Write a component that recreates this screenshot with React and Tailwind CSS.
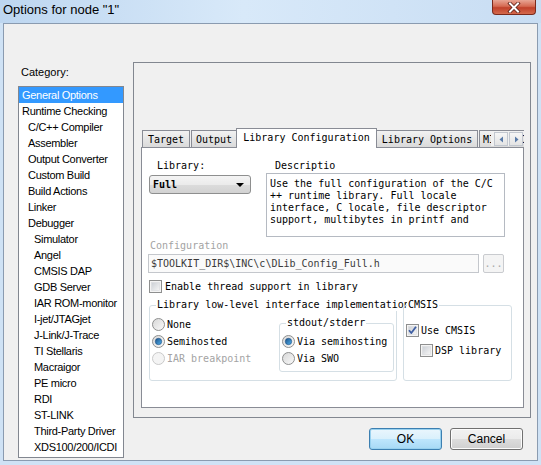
import React from "react";

const cats = [
  ["General Options", 0, true],
  ["Runtime Checking", 0],
  ["C/C++ Compiler", 1],
  ["Assembler", 1],
  ["Output Converter", 1],
  ["Custom Build", 1],
  ["Build Actions", 1],
  ["Linker", 1],
  ["Debugger", 1],
  ["Simulator", 2],
  ["Angel", 2],
  ["CMSIS DAP", 2],
  ["GDB Server", 2],
  ["IAR ROM-monitor", 2],
  ["I-jet/JTAGjet", 2],
  ["J-Link/J-Trace", 2],
  ["TI Stellaris", 2],
  ["Macraigor", 2],
  ["PE micro", 2],
  ["RDI", 2],
  ["ST-LINK", 2],
  ["Third-Party Driver", 2],
  ["XDS100/200/ICDI", 2],
];
const indent = ["pl-[3px]", "pl-[9px]", "pl-[15px]"];

function Radio({ checked, disabled }) {
  return (
    <svg width="13" height="13" viewBox="0 0 13 13" className="shrink-0">
      <defs>
        <linearGradient id="rin" x1="0" y1="0" x2="1" y2="1">
          <stop offset="0" stopColor="#d6d6d6" />
          <stop offset="1" stopColor="#fbfbfb" />
        </linearGradient>
        <linearGradient id="rdot" x1="0" y1="0" x2="1" y2="1">
          <stop offset="0" stopColor="#1b4f86" />
          <stop offset="1" stopColor="#52b3f0" />
        </linearGradient>
      </defs>
      <circle cx="6.5" cy="6.5" r="6" fill={disabled ? "#f4f4f4" : "url(#rin)"} stroke={disabled ? "#c9c9c9" : "#8e8f8f"} strokeWidth="1" />
      {checked && <circle cx="6.5" cy="6.5" r="3.2" fill="url(#rdot)" stroke="#1d4d80" strokeWidth="0.6" />}
    </svg>
  );
}

function Check({ checked }) {
  return (
    <svg width="13" height="13" viewBox="0 0 13 13" className="shrink-0">
      <defs>
        <linearGradient id="cin" x1="0" y1="0" x2="1" y2="1">
          <stop offset="0" stopColor="#cbcfd5" />
          <stop offset="1" stopColor="#f6f6f6" />
        </linearGradient>
      </defs>
      <rect x="0.5" y="0.5" width="12" height="12" fill="#f4f4f4" stroke="#8e8f8f" />
      <rect x="2.5" y="2.5" width="8" height="8" fill="url(#cin)" stroke="#d9dbde" strokeWidth="0.6" />
      {checked && (
        <path d="M3 6.2 L5.3 9 L10 2.8" fill="none" stroke="#3e5ea3" strokeWidth="1.8" strokeLinejoin="round" />
      )}
    </svg>
  );
}

export default function App() {
  const mono = "font-['DejaVu_Sans_Mono',monospace] text-[10px]";
  return (
    <div className="w-[541px] h-[465px] bg-[#cfe2f5] flex flex-col overflow-hidden">
      {/* Title bar */}
      <div className="h-[23px] relative bg-[linear-gradient(to_right,#bdd6f0,#d8e9f9_45%,#c8ddf3)] shrink-0">
        <div className="pl-[3px] pt-[2px] leading-[16px] text-[13px] text-black font-['Liberation_Sans',sans-serif]">
          Options for node "1"
        </div>
        <div className="absolute left-[492px] top-0 w-[44px] h-[15px] rounded-b-[4px] border border-t-0 border-[#7a2a1c] bg-[linear-gradient(to_bottom,#e8a594,#d56a52_45%,#c0412a_55%,#d4694c)] flex items-center justify-center">
          <svg width="14" height="11" viewBox="0 0 14 11">
            <path d="M3 1.5 L11 9.5 M11 1.5 L3 9.5" stroke="#5a1e14" strokeWidth="3.6" strokeLinecap="square" />
            <path d="M3 1.5 L11 9.5 M11 1.5 L3 9.5" stroke="#ffffff" strokeWidth="2" strokeLinecap="square" />
          </svg>
        </div>
      </div>

      {/* Client */}
      <div className="mx-[3px] h-[438px] shrink-0 border border-[#8a9bb0] bg-[#f0f0f0] flex font-['Liberation_Sans',sans-serif] text-black">
        {/* Left column */}
        <div className="ml-[14px] pt-[41px] w-[106px] shrink-0">
          <div className="h-[14px] leading-[14px] pl-[3px] text-[11px]">Category:</div>
          <div className="mt-[7px] h-[372px] border border-[#828790] bg-white flex flex-col overflow-hidden">
            {cats.map(([name, lvl, sel]) => (
              <div
                key={name}
                className={
                  "h-[16px] leading-[16px] text-[11px] tracking-[-0.3px] whitespace-nowrap " +
                  indent[lvl] +
                  (sel ? " bg-[#3399ff] text-white" : "")
                }
              >
                {name}
              </div>
            ))}
          </div>
        </div>

        {/* Right column */}
        <div className="ml-[9px] pt-[38px] w-[398px] shrink-0 flex flex-col">
          <div className="h-[356px] border border-[#828790] pt-[65px] pl-[7px]">
            {/* Tab control */}
            <div className={"w-[383px] " + mono}>
              <div className="relative z-10 h-[20px] flex items-end overflow-hidden">
                <div className="ml-[1px] w-[48px] h-[17px] mb-[1px] border border-b-0 border-[#898c95] bg-[linear-gradient(to_bottom,#f2f2f2,#dadada)] flex items-center justify-center leading-[15px] shrink-0">
                  Target
                </div>
                <div className="ml-[1px] w-[46px] h-[17px] mb-[1px] border border-b-0 border-[#898c95] bg-[linear-gradient(to_bottom,#f2f2f2,#dadada)] flex items-center justify-center leading-[15px] shrink-0">
                  Output
                </div>
                <div className="ml-[-1px] w-[141px] h-[20px] border border-b-0 border-[#898c95] bg-white flex items-start pt-[2px] justify-center leading-[14px] shrink-0">
                  Library Configuration
                </div>
                <div className="w-[101px] h-[17px] mb-[1px] border border-b-0 border-l-0 border-[#898c95] bg-[linear-gradient(to_bottom,#f2f2f2,#dadada)] flex items-center justify-center leading-[15px] shrink-0">
                  Library Options
                </div>
                <div className="ml-[1px] w-[60px] h-[17px] mb-[1px] border border-b-0 border-[#898c95] bg-[linear-gradient(to_bottom,#f2f2f2,#dadada)] flex items-center pl-[3px] leading-[15px] shrink-0">
                  MISRA-C
                </div>
                <div className="absolute right-[1px] top-[4px] flex gap-[1px] bg-[#f0f0f0] pl-[3px]">
                  <div className="w-[14px] h-[14px] border border-[#c2c7cf] bg-[linear-gradient(to_bottom,#f6f6f6,#e4e4e4)] flex items-center justify-center">
                    <svg width="5" height="7" viewBox="0 0 5 7"><path d="M4 0.5 L0.5 3.5 L4 6.5 Z" fill="#5a7ba8" /></svg>
                  </div>
                  <div className="w-[14px] h-[14px] border border-[#c2c7cf] bg-[linear-gradient(to_bottom,#f6f6f6,#e4e4e4)] flex items-center justify-center">
                    <svg width="5" height="7" viewBox="0 0 5 7"><path d="M1 0.5 L4.5 3.5 L1 6.5 Z" fill="#5a7ba8" /></svg>
                  </div>
                </div>
              </div>

              {/* Panel */}
              <div className="-mt-[1px] h-[261px] border border-[#898c95] bg-white pl-[6px] pt-[12px] text-black">
                {/* Library + description */}
                <div className="flex">
                  <div className="w-[103px] shrink-0">
                    <div className="pl-[9px] h-[12px] leading-[12px]">Library:</div>
                    <div className="mt-[3px] ml-[1px] w-[102px] h-[19px] rounded-[3px] border border-[#8e8f8f] bg-[linear-gradient(to_bottom,#f4f4f4,#ebebeb_50%,#dcdcdc_50%,#d2d2d2)] flex items-center pl-[3px] pr-[6px]">
                      <span className="flex-1 font-bold">Full</span>
                      <svg width="8" height="4" viewBox="0 0 8 4"><path d="M0 0 L8 0 L4 4 Z" fill="#000" /></svg>
                    </div>
                  </div>
                  <div className="ml-[15px]">
                    <div className="pl-[9px] h-[12px] leading-[12px]">Descriptio</div>
                    <div className="mt-[1px] w-[239px] h-[64px] border border-[#b5bac2] bg-white pl-[3px] pt-[4px] leading-[12px] whitespace-pre">
                      {"Use the full configuration of the C/C\n++ runtime library. Full locale\ninterface, C locale, file descriptor\nsupport, multibytes in printf and"}
                    </div>
                  </div>
                </div>

                {/* Configuration */}
                <div className="mt-[3px] pl-[2px] h-[12px] leading-[12px] text-[#a3a3a3]">Configuration</div>
                <div className="mt-[2px] flex">
                  <div className="w-[331px] h-[19px] border border-[#c4c7cc] bg-[#fafafa] pl-[2px] leading-[17px] text-[#3a3a3a] whitespace-nowrap">
                    $TOOLKIT_DIR$\INC\c\DLib_Config_Full.h
                  </div>
                  <div className="ml-[4px] w-[21px] h-[19px] rounded-[2px] border border-[#c9cbcf] bg-[#f4f4f4] text-[#a8a8a8] flex items-center justify-center leading-[17px]">
                    ...
                  </div>
                </div>

                {/* Thread checkbox */}
                <div className="mt-[7px] ml-[1px] flex items-center h-[13px]">
                  <Check />
                  <span className="ml-[3px] leading-[13px]">Enable thread support in library</span>
                </div>

                {/* Groups */}
                <div className="mt-[12px] flex">
                  <div className="ml-[1px] w-[248px] h-[76px] border border-[#d5dfe5] rounded-[3px] relative flex">
                    <div className="absolute left-[6px] top-[-7px] px-[1px] bg-white h-[12px] leading-[12px] whitespace-nowrap">
                      Library low-level interface implementation
                    </div>
                    <div className="pl-[2px] pt-[10px] w-[129px] shrink-0">
                      <div className="h-[17px] flex items-center">
                        <Radio />
                        <span className="ml-[2px]">None</span>
                      </div>
                      <div className="h-[17px] flex items-center">
                        <Radio checked />
                        <span className="ml-[2px]">Semihosted</span>
                      </div>
                      <div className="h-[17px] flex items-center text-[#a3a3a3]">
                        <Radio disabled />
                        <span className="ml-[2px]">IAR breakpoint</span>
                      </div>
                    </div>
                    <div className="mt-[17px] w-[115px] h-[49px] border border-[#d5dfe5] rounded-[3px] relative pl-[2px] pt-[9px] shrink-0">
                      <div className="absolute left-[6px] top-[-7px] px-[1px] bg-white h-[12px] leading-[12px] whitespace-nowrap">
                        stdout/stderr
                      </div>
                      <div className="h-[17px] flex items-center">
                        <Radio checked />
                        <span className="ml-[2px]">Via semihosting</span>
                      </div>
                      <div className="h-[17px] flex items-center">
                        <Radio />
                        <span className="ml-[2px]">Via SWO</span>
                      </div>
                    </div>
                  </div>
                  <div className="ml-[6px] w-[109px] h-[76px] border border-[#d5dfe5] rounded-[3px] relative pl-[2px] pt-[18px]">
                    <div className="absolute left-[3px] top-[-7px] px-[1px] bg-white h-[12px] leading-[12px] whitespace-nowrap">
                      CMSIS
                    </div>
                    <div className="h-[13px] flex items-center">
                      <Check checked />
                      <span className="ml-[2px]">Use CMSIS</span>
                    </div>
                    <div className="mt-[7px] pl-[14px] h-[13px] flex items-center">
                      <Check />
                      <span className="ml-[2px]">DSP library</span>
                    </div>
                  </div>
                </div>
              </div>
            </div>
          </div>

          {/* Buttons */}
          <div className="mt-[10px] pr-[8px] flex justify-end gap-[8px] text-[12px]">
            <div className="w-[73px] h-[22px] rounded-[3px] border border-[#3c7fb1] bg-[linear-gradient(to_bottom,#eaf6fd,#d9f0fc_50%,#bee6fd_50%,#a7d9f5)] shadow-[inset_0_0_0_1px_#98d1ef] flex items-center justify-center">
              OK
            </div>
            <div className="w-[73px] h-[22px] rounded-[3px] border border-[#707070] bg-[linear-gradient(to_bottom,#f2f2f2,#ebebeb_50%,#dddddd_50%,#cfcfcf)] shadow-[inset_0_0_0_1px_#fcfcfc] flex items-center justify-center">
              Cancel
            </div>
          </div>
        </div>
      </div>
    </div>
  );
}
